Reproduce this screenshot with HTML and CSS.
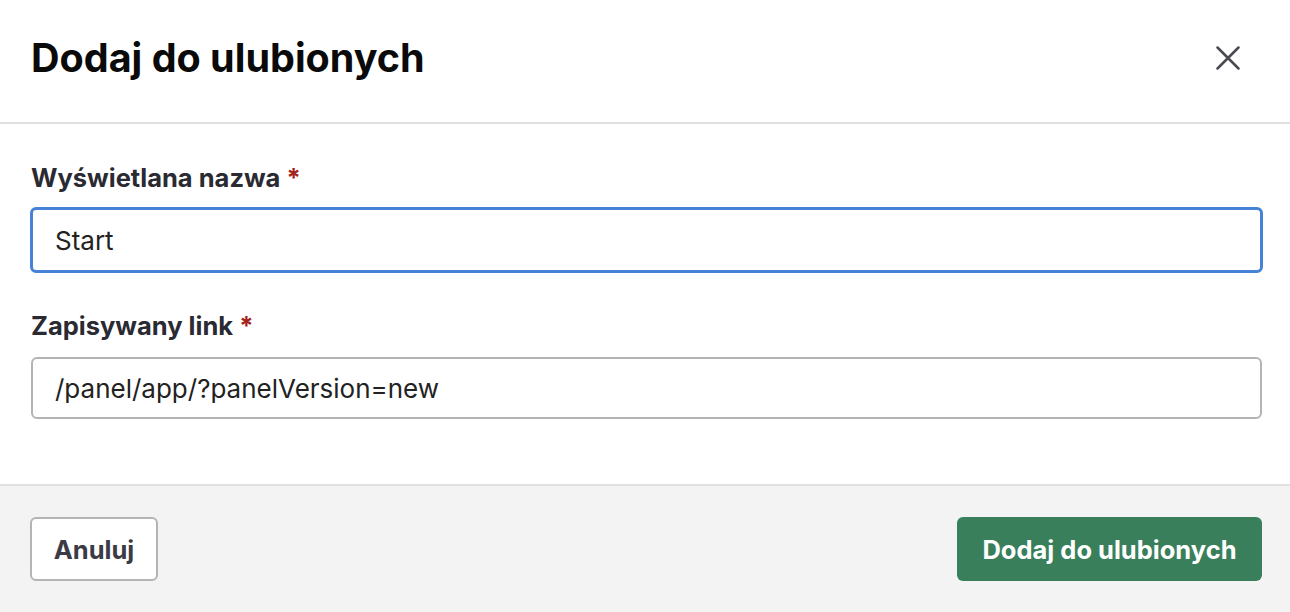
FILE: index.html
```html
<!DOCTYPE html>
<html lang="pl">
<head>
<meta charset="utf-8">
<title>Dodaj do ulubionych</title>
<link rel="stylesheet" href="styles.css">
</head>
<body>
<div class="modal">
  <header class="modal-header">
    <h1 class="modal-title">Dodaj do ulubionych</h1>
    <button class="close-btn" aria-label="Zamknij">
      <svg width="24" height="24" viewBox="0 0 24 24" fill="none" stroke="#4a4a52" stroke-width="2.5" stroke-linecap="round">
        <path d="M1.5 1.5 L22.5 22.5 M22.5 1.5 L1.5 22.5"/>
      </svg>
    </button>
  </header>
  <main class="modal-body">
    <div class="field">
      <label class="field-label">Wyświetlana nazwa <span class="req">*</span></label>
      <div class="input input-focus">Start</div>
    </div>
    <div class="field">
      <label class="field-label">Zapisywany link <span class="req">*</span></label>
      <div class="input">/panel/app/?panelVersion=new</div>
    </div>
  </main>
  <footer class="modal-footer">
    <button class="btn btn-secondary">Anuluj</button>
    <button class="btn btn-primary">Dodaj do ulubionych</button>
  </footer>
</div>
</body>
</html>
```

FILE: styles.css
```css
* { box-sizing: border-box; }
html, body { margin: 0; padding: 0; background: #fff; }
body { font-family: Inter, "Noto Sans", sans-serif; color: #2a2a33; }
.modal { width: 1290px; height: 612px; display: flex; flex-direction: column; }
.modal-header {
  height: 124px;
  border-bottom: 2px solid #e0e0e0;
  display: flex; align-items: center; justify-content: space-between;
  padding: 0 50px 0 31px;
}
.modal-title { margin: 0; font-size: 39.5px; font-weight: 700; color: #0a0a0a; line-height: 48px; position: relative; top: -3px; }
.close-btn { background: none; border: 0; padding: 0; width: 24px; height: 24px; display: flex; position: relative; top: -3px; }
.modal-body { padding: 39px 28px 0 31px; flex: 1; display: flex; flex-direction: column; gap: 40px; }
.field { display: flex; flex-direction: column; gap: 16px; }
.field-label { font-size: 25.5px; font-weight: 700; color: #2a2a33; line-height: 30px; }
.req { color: #a3221b; }
.input {
  height: 62px; border: 2px solid #b4b4b4; border-radius: 6px; background: #fff;
  display: flex; align-items: center; padding-left: 22px;
  font-size: 26px; color: #222;
}
.input-focus { border: 3px solid #4683d6; height: 66px; margin: -2px -1px -2px -1px; padding-left: 22px; }
.modal-footer {
  height: 128px; background: #f3f3f3; border-top: 2px solid #e0e0e0;
  display: flex; align-items: center; justify-content: space-between;
  padding: 0 28px 0 30px;
}
.btn { height: 64px; border-radius: 6px; font-family: Inter, "Noto Sans", sans-serif; font-size: 25.5px; font-weight: 700; padding: 0; }
.btn-secondary { background: #fff; border: 2px solid #b4b4b4; color: #3b3b45; width: 128px; }
.btn-primary { background: #3a7f5b; border: 0; color: #fff; width: 305px; }
```
